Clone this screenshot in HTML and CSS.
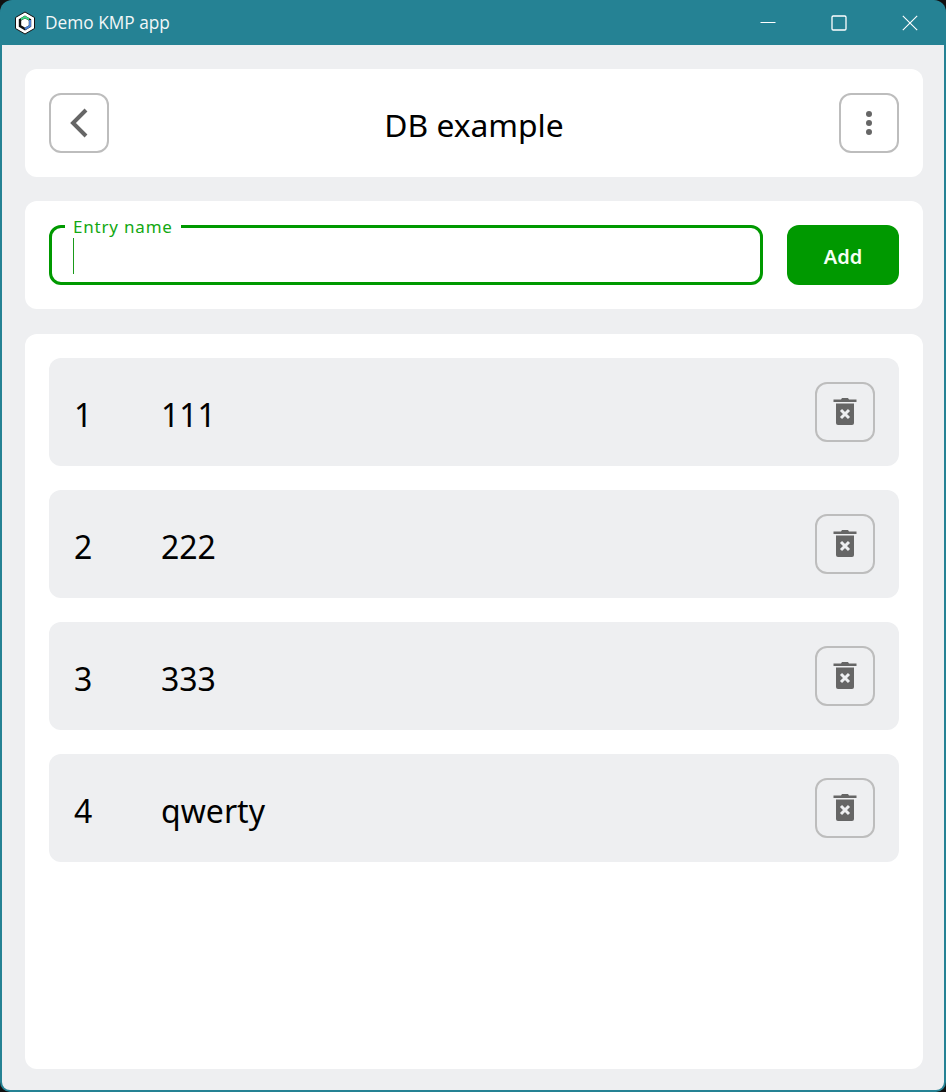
FILE: index.html
```html
<!DOCTYPE html>
<html lang="en">
<head>
<meta charset="utf-8">
<title>Demo KMP app</title>
<link rel="stylesheet" href="styles.css">
</head>
<body>
<div class="window">
  <header class="titlebar">
    <svg class="logo" width="22" height="24" viewBox="0 0 22 24">
      <path d="M11 1 L20.500 6.500 V17.500 L11 23 L1.500 17.500 V6.500 Z" fill="#fff" stroke="#111" stroke-width="1"/>
      <path d="M11 6 L16 9 V15 L11 18 L6 15 V9 Z" fill="#fff" stroke="#111" stroke-width="2.400"/>
      <path d="M7 8.400 L11 6 L15 8.400" fill="none" stroke="#3ddc84" stroke-width="2"/>
      <path d="M16 9 V15 L11 18" fill="none" stroke="#4a7fd0" stroke-width="2.200"/>
    </svg>
    <span class="app-title">Demo KMP app</span>
    <div class="controls">
      <button class="ctl"><svg width="16" height="16" viewBox="0 0 16 16"><path d="M0.500 7.500H15.500" stroke="#fff" stroke-width="1"/></svg></button>
      <button class="ctl"><svg width="16" height="16" viewBox="0 0 16 16"><rect x="1" y="1" width="14" height="14" rx="1.200" fill="none" stroke="#fff" stroke-width="1.300"/></svg></button>
      <button class="ctl"><svg width="16" height="16" viewBox="0 0 16 16"><path d="M0.800 0.800L15.200 15.200M15.200 0.800L0.800 15.200" stroke="#fff" stroke-width="1.100"/></svg></button>
    </div>
  </header>
  <main class="content">
    <section class="card top">
      <button class="icon-btn"><svg width="24" height="36" viewBox="0 0 24 36"><path d="M19 5 L6 18 L19 31" fill="none" stroke="#666" stroke-width="4"/></svg></button>
      <h1 class="heading">DB example</h1>
      <button class="icon-btn"><svg width="8" height="28" viewBox="0 0 8 28"><circle cx="4" cy="5" r="3" fill="#666"/><circle cx="4" cy="14" r="3" fill="#666"/><circle cx="4" cy="23" r="3" fill="#666"/></svg></button>
    </section>
    <section class="card add">
      <div class="field">
        <label class="field-label">Entry name</label>
        <span class="caret"></span>
      </div>
      <button class="add-btn">Add</button>
    </section>
    <section class="card list">
      <div class="row"><span class="num">1</span><span class="name">111</span>
        <button class="icon-btn trash"><svg width="24" height="28" viewBox="0 0 24 28"><path d="M9 0H15L16 1.500H23.500V4H0.500V1.500H8Z" fill="#666"/><path d="M3 5.500H21V25a2 2 0 0 1-2 2H5a2 2 0 0 1-2-2Z" fill="#666"/><path d="M8 12L16 20M16 12L8 20" stroke="#eeeff1" stroke-width="3"/></svg></button></div>
      <div class="row"><span class="num">2</span><span class="name">222</span>
        <button class="icon-btn trash"><svg width="24" height="28" viewBox="0 0 24 28"><path d="M9 0H15L16 1.500H23.500V4H0.500V1.500H8Z" fill="#666"/><path d="M3 5.500H21V25a2 2 0 0 1-2 2H5a2 2 0 0 1-2-2Z" fill="#666"/><path d="M8 12L16 20M16 12L8 20" stroke="#eeeff1" stroke-width="3"/></svg></button></div>
      <div class="row"><span class="num">3</span><span class="name">333</span>
        <button class="icon-btn trash"><svg width="24" height="28" viewBox="0 0 24 28"><path d="M9 0H15L16 1.500H23.500V4H0.500V1.500H8Z" fill="#666"/><path d="M3 5.500H21V25a2 2 0 0 1-2 2H5a2 2 0 0 1-2-2Z" fill="#666"/><path d="M8 12L16 20M16 12L8 20" stroke="#eeeff1" stroke-width="3"/></svg></button></div>
      <div class="row"><span class="num">4</span><span class="name">qwerty</span>
        <button class="icon-btn trash"><svg width="24" height="28" viewBox="0 0 24 28"><path d="M9 0H15L16 1.500H23.500V4H0.500V1.500H8Z" fill="#666"/><path d="M3 5.500H21V25a2 2 0 0 1-2 2H5a2 2 0 0 1-2-2Z" fill="#666"/><path d="M8 12L16 20M16 12L8 20" stroke="#eeeff1" stroke-width="3"/></svg></button></div>
    </section>
  </main>
</div>
</body>
</html>
```
FILE: styles.css
```css
* { box-sizing: border-box; }
html, body { margin: 0; padding: 0; width: 946px; height: 1092px; background: #111; overflow: hidden; }
body { font-family: "Noto Sans", "Open Sans", sans-serif; color: #000; }
button { font-family: inherit; padding: 0; margin: 0; }

.window {
  width: 946px; height: 1092px;
  background: #258294;
  border-radius: 12px 12px 10px 10px;
  padding: 0 2px 2px;
  display: flex; flex-direction: column;
  overflow: hidden;
}
.titlebar {
  height: 45px; flex: none;
  display: flex; align-items: center;
  padding-left: 12px;
  color: #fff;
}
.logo { flex: none; }
.app-title { margin-left: 9px; font-size: 17.3px; font-family: "Open Sans", sans-serif; color: #f2f7f8; }
.controls { margin-left: auto; display: flex; margin-right: -1px; }
.ctl {
  width: 71px; height: 45px; border: 0; background: none;
  display: flex; align-items: center; justify-content: center;
}

.content {
  flex: 1;
  background: #eeeff1;
  padding: 24px 21px 21px 23px;
  display: flex; flex-direction: column; gap: 24px;
  border-radius: 0 0 8px 8px;
}
.card { background: #fff; border-radius: 12px; padding: 24px; }
.top, .add { height: 108px; flex: none; display: flex; align-items: center; justify-content: space-between; }
.icon-btn {
  width: 60px; height: 60px; flex: none;
  border: 2px solid #bdbdbd; border-radius: 12px;
  background: transparent;
  display: flex; align-items: center; justify-content: center;
}
.heading { margin: 0; font-size: 31.8px; font-weight: 400; line-height: 60px; padding-top: 4px; }

.add { gap: 24px; }
.field {
  flex: 1; height: 60px; position: relative;
  border: 3px solid #009900; border-radius: 12px;
}
.field-label {
  position: absolute; left: 13px; top: -11px;
  padding: 0 8px;
  background: #fff;
  color: #12a812; font-size: 17px; line-height: 20px; letter-spacing: 0.8px;
}
.caret { position: absolute; left: 21px; top: 10px; width: 1px; height: 36px; background: #1a9a1a; }
.add-btn {
  width: 112px; height: 60px; flex: none;
  border: 0; border-radius: 12px;
  background: #009900; color: #f4fff4;
  font-size: 20px; font-weight: 600;
  padding-top: 3px;
}

.list { flex: 1; display: flex; flex-direction: column; gap: 24px; margin-top: 0.5px; padding-top: 24.2px; }
.row {
  height: 108px; flex: none;
  background: #eeeff1; border-radius: 12px;
  display: flex; align-items: center;
  padding: 0 24px;
  font-size: 32px;
}
.num { width: 88px; padding-left: 1px; }
.name { flex: 1; }
.row .num, .row .name { padding-top: 6px; }
```
